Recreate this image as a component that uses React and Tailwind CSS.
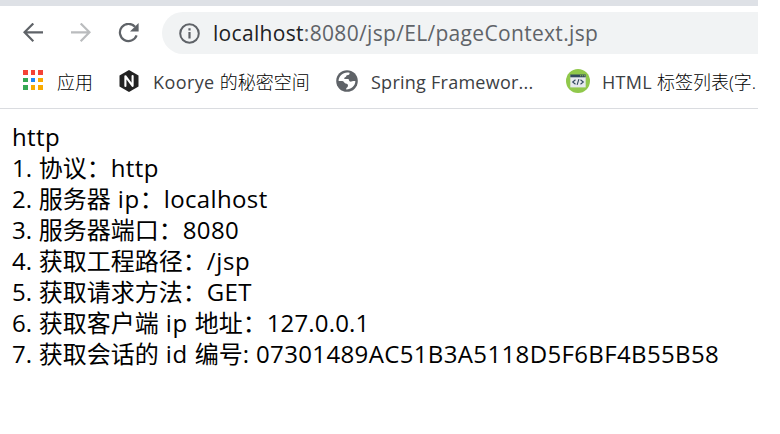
import React from "react";

// Runs of each line: plain strings are Chinese text, [text, tracking] pairs are Latin text.
const NUM = "tracking-[0.15px]";
const WORD = "tracking-[0.36px]";
const SHORT = "tracking-[0.7px]";

const lines = [
  [["1. ", NUM], "协议：", ["http", WORD]],
  [["2. ", NUM], "服务器", [" ip", SHORT], "：", ["localhost", WORD]],
  [["3. ", NUM], "服务器端口：", ["8080", WORD]],
  [["4. ", NUM], "获取工程路径：", ["/jsp", SHORT]],
  [["5. ", NUM], "获取请求方法：", ["GET", WORD]],
  [["6. ", NUM], "获取客户端", [" ip ", SHORT], "地址：", ["127.0.0.1", NUM]],
  [["7. ", NUM], "获取会话的", [" id ", SHORT], "编号", [": 07301489AC51B3A5118D5F6BF4B55B58", WORD]],
];

function BackIcon({ className }) {
  return (
    <svg className={className} width="20" height="20" viewBox="0 0 20 20" fill="none" stroke="currentColor" strokeWidth="2.2">
      <path d="M20 9.3H1.8M10.3 .5L1.5 9.3L10.3 18.2" />
    </svg>
  );
}

function ReloadIcon() {
  return (
    <svg className="ml-[27px] shrink-0 text-[#5f6368]" width="22" height="20" viewBox="0 0 22 20">
      <path d="M17 3.8A8.6 8.6 0 1 0 18.6 12.4" fill="none" stroke="currentColor" strokeWidth="2.2" />
      <path d="M20.6 0V8.6H12Z" fill="currentColor" />
    </svg>
  );
}

function InfoIcon() {
  return (
    <svg className="ml-[17px] shrink-0" width="21" height="21" viewBox="0 0 21 21">
      <circle cx="10.5" cy="10.5" r="9.3" fill="none" stroke="#5f6368" strokeWidth="2" />
      <path d="M9.4 5.3h2.2v2.2H9.4zM9.4 9.1h2.2v6.4H9.4z" fill="#5f6368" />
    </svg>
  );
}

function AppsIcon() {
  return (
    <svg className="mb-0.5 ml-[23px] shrink-0" width="20" height="20" viewBox="0 0 20 20">
      <path d="M0 0h5v5H0zM8 0h4v5H8zM15 0h5v5h-5z" fill="#f44336" />
      <path d="M0 8h5v4H0zM0 15h5v5H0z" fill="#34a853" />
      <path d="M8 8h4v4H8z" fill="#1e88f5" />
      <path d="M15 8h5v4h-5zM8 15h4v5H8zM15 15h5v5h-5z" fill="#f9ab00" />
    </svg>
  );
}

function HexIcon() {
  return (
    <svg className="ml-[26px] shrink-0" width="20" height="22" viewBox="0 0 20 22">
      <path d="M10 0L19.5 5.5V16.5L10 22L.5 16.5V5.5Z" fill="#222" />
      <path d="M6.4 16V6.2L13.6 15.8V6" fill="none" stroke="#fff" strokeWidth="2.1" strokeLinejoin="round" strokeLinecap="round" />
    </svg>
  );
}

function GlobeIcon() {
  return (
    <svg className="shrink-0" width="22" height="22" viewBox="0 0 22 22">
      <circle cx="11" cy="11" r="10.8" fill="#5f6368" />
      <path d="M13.6 2.8C13.8 4.8 12.6 5.2 11 5.3C10 5.4 10.6 7 9.2 7.3C7.8 7.6 7.8 9 9 9H12C13.4 9 12.6 11.3 14 11.6C15.6 11.9 16.8 10.8 19.4 11.2C19.2 15.6 15.4 19.4 10.2 19.4C9.8 17.9 11.4 17.7 11.9 16.2C12.4 14.4 11.2 13.6 9.6 13.5C8 13.4 8.4 11.2 6.4 11.1L2.6 11C2.6 5.8 8 1.2 13.6 2.8Z" fill="#fff" />
    </svg>
  );
}

function CodeIcon() {
  return (
    <svg className="shrink-0" width="24" height="24" viewBox="0 0 24 24">
      <circle cx="12" cy="12" r="12" fill="#90c84b" />
      <path d="M4.3 6h15.4v12.4H4.3z" fill="#e6e9ee" />
      <path d="M4.3 5.5h15.4v2.8H4.3z" fill="#324a5e" />
      <path d="M14 6.3h1.2v1H14zM16 6.3h1.2v1H16zM18 6.3h1v1h-1z" fill="#90c84b" />
      <path d="M9.5 10.8L6.7 13L9.5 15.2M14.5 10.8L17.3 13L14.5 15.2M12.9 10.2L11.1 15.9" fill="none" stroke="#324a5e" strokeWidth="1.1" />
    </svg>
  );
}

export default function App() {
  return (
    <div className="h-[434px] w-[780px] overflow-hidden bg-white font-['Open_Sans','Noto_Sans_CJK_SC',sans-serif]">
      <div className="w-[758px] overflow-hidden whitespace-nowrap">
        <div className="h-1.5 bg-[#dee1e6]" />
        <div className="flex h-[54px] items-center">
          <BackIcon className="ml-[23px] shrink-0 text-[#5f6368]" />
          <BackIcon className="ml-7 shrink-0 -scale-x-100 text-[#babcbe]" />
          <ReloadIcon />
          <div className="ml-[22px] flex h-[42px] flex-1 items-center rounded-l-full bg-[#f1f3f4]">
            <InfoIcon />
            <div className="ml-[13px] text-[21px] leading-[42px] tracking-[0.32px] text-[#5f6368]">
              <span className="text-[#202124]">localhost</span>
              <span>:8080/jsp/EL/pageContext.jsp</span>
            </div>
          </div>
        </div>
        <div className="flex h-[49px] items-center border-b border-[#dadce0] pb-[6px] text-[18px] leading-7 text-[#3c4043]">
          <AppsIcon />
          <span className="ml-3.5 w-9 shrink-0 pt-0.5 font-light text-black">应用</span>
          <HexIcon />
          <div className="ml-3.5 w-[183px] shrink-0 pt-0.5 font-light text-black">
            <span className="font-normal tracking-[0.4px] text-[#3c4043]">Koorye </span>的秘密空间
          </div>
          <GlobeIcon />
          <span className="ml-[13px] w-[195px] shrink-0 pt-0.5 tracking-[0.25px]">Spring Framewor...</span>
          <CodeIcon />
          <div className="ml-3 shrink-0 pt-0.5 font-light text-black">
            <span className="font-normal tracking-[0.3px] text-[#3c4043]">HTML </span>标签列表(字.
          </div>
        </div>
      </div>
      <div className="pl-3 pt-3 text-[24px] leading-[31px] text-black">
        <div className="h-[31px] tracking-[0.36px]">http</div>
        {lines.map((runs, n) => (
          <div key={n} className="h-[31px] whitespace-pre">
            {runs.map((run, i) =>
              typeof run === "string" ? (
                <span key={i}>{run}</span>
              ) : (
                <span key={i} className={run[1]}>{run[0]}</span>
              )
            )}
          </div>
        ))}
      </div>
    </div>
  );
}
